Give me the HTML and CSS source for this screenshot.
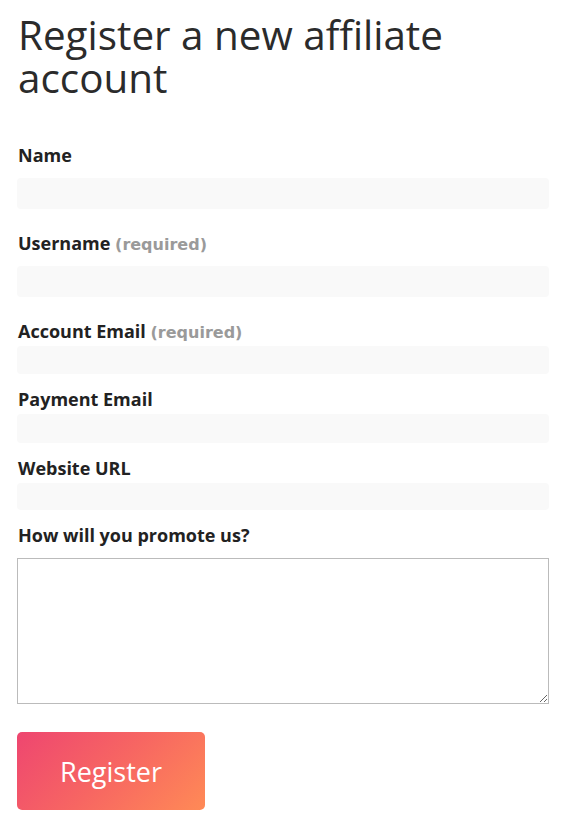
FILE: index.html
```html
<!DOCTYPE html>
<html lang="en">
<head>
<meta charset="utf-8">
<title>Register a new affiliate account</title>
<link rel="stylesheet" href="styles.css">
</head>
<body>
<div class="page">
  <h1 class="title">Register a new affiliate account</h1>
  <form class="form">
    <div class="field field--wide">
      <label class="label" for="name">Name</label>
      <input class="input input--31" id="name" type="text">
    </div>
    <div class="field field--wide">
      <label class="label" for="user">Username <span class="req">(required)</span></label>
      <input class="input input--31" id="user" type="text">
    </div>
    <div class="field">
      <label class="label" for="email">Account Email <span class="req">(required)</span></label>
      <input class="input input--28" id="email" type="email">
    </div>
    <div class="field">
      <label class="label" for="pay">Payment Email</label>
      <input class="input input--29" id="pay" type="email">
    </div>
    <div class="field">
      <label class="label" for="url">Website URL</label>
      <input class="input input--27" id="url" type="url">
    </div>
    <div class="field field--area">
      <label class="label" for="promo">How will you promote us?</label>
      <textarea class="textarea" id="promo"></textarea>
    </div>
    <button class="button" type="button">Register</button>
  </form>
</div>
</body>
</html>
```
FILE: styles.css
```css
html, body {
  margin: 0;
  padding: 0;
  background: #fff;
}
body {
  font-family: "Open Sans", "Liberation Sans", sans-serif;
  color: #222;
}
.page {
  width: 532px;
  margin-left: 17px;
}
.title {
  margin: 13px 0 0 1px;
  font-size: 40.4px;
  line-height: 43px;
  font-weight: 400;
  color: #2b2b2b;
}
.form {
  display: flex;
  flex-direction: column;
  margin-top: 44px;
}
.field {
  display: flex;
  flex-direction: column;
  gap: 3px;
  margin-bottom: 13px;
}
.field--wide {
  gap: 11px;
  margin-bottom: 22px;
}
.field--area {
  gap: 11px;
  margin-bottom: 28px;
}
.label {
  display: block;
  height: 24px;
  margin-left: 1px;
  font-size: 18px;
  line-height: 24px;
  font-weight: 700;
  color: #222;
}
.req {
  font-family: "DejaVu Sans", "Open Sans", sans-serif;
  font-size: 16px;
  line-height: 16px;
  font-weight: 700;
  color: #9a9a9a;
}
.input {
  display: block;
  box-sizing: border-box;
  width: 532px;
  border: none;
  border-radius: 4px;
  background: #f9f9f9;
  margin: 0;
  padding: 0 10px;
}
.input--31 { height: 31px; }
.input--28 { height: 28px; }
.input--29 { height: 29px; }
.input--27 { height: 27px; }
.textarea {
  display: block;
  box-sizing: border-box;
  width: 532px;
  height: 146px;
  margin: 0;
  border: 1px solid #bbb;
  border-radius: 0;
  background: #fff;
}
.button {
  width: 188px;
  height: 78px;
  border: none;
  border-radius: 5px;
  background: linear-gradient(135deg, #ee4670 0%, #f76662 50%, #ff8a56 100%);
  color: #fff;
  font-family: "Open Sans", "Liberation Sans", sans-serif;
  font-size: 27px;
  font-weight: 400;
  padding: 0;
}
```
